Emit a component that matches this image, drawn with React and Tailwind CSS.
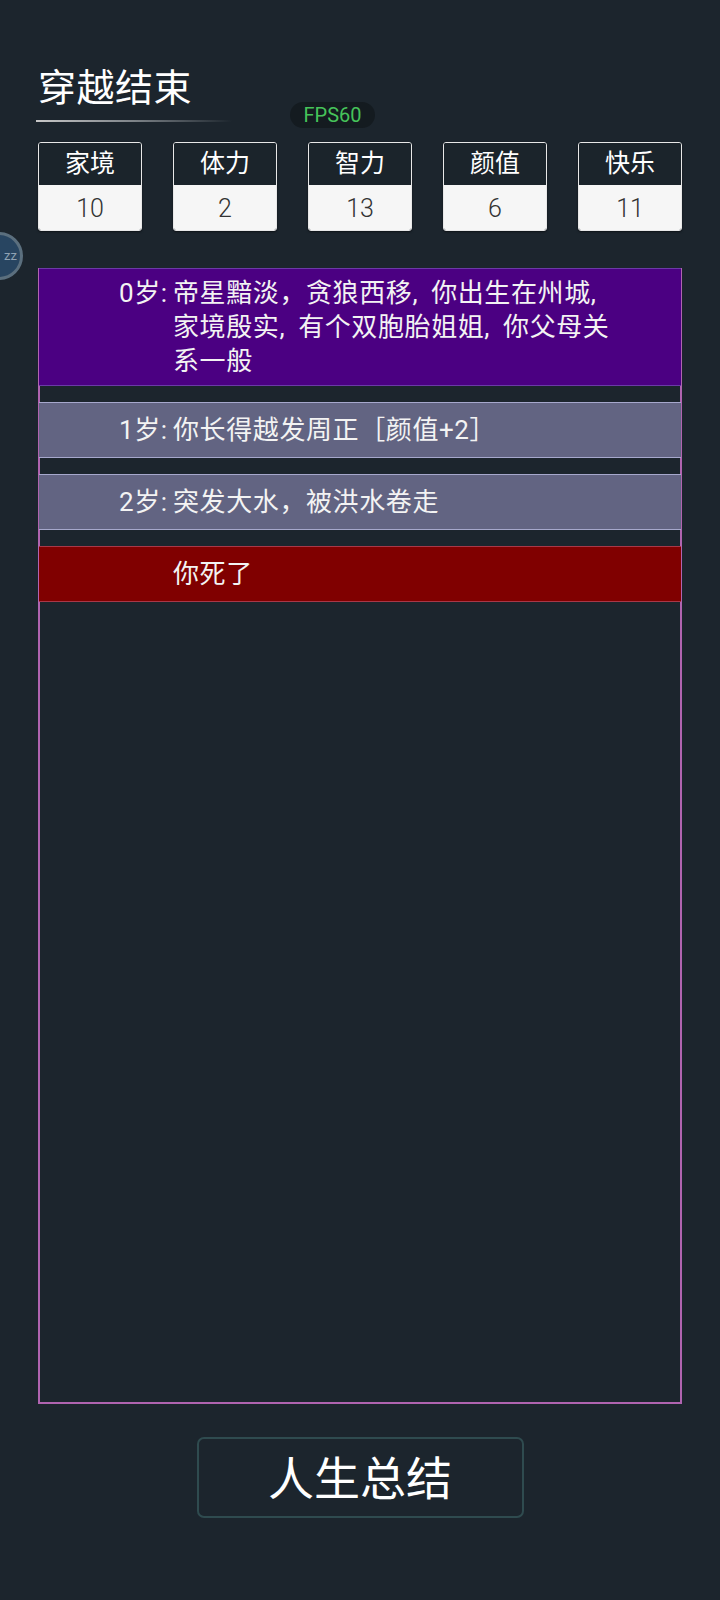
import React from 'react';

const STATS = [
  { name: '家境', value: 10 },
  { name: '体力', value: 2 },
  { name: '智力', value: 13 },
  { name: '颜值', value: 6 },
  { name: '快乐', value: 11 },
];

const LOG = [
  { age: '0岁:', text: '帝星黯淡，贪狼西移,你出生在州城,家境殷实,有个双胞胎姐姐,你父母关系一般', tone: 'purple' },
  { age: '1岁:', text: '你长得越发周正［颜值+2］', tone: 'gray' },
  { age: '2岁:', text: '突发大水，被洪水卷走', tone: 'gray' },
  { age: '', text: '你死了', tone: 'red' },
];

const TONES = {
  purple: 'bg-[#4b0082] border-[#6b3aa6]',
  gray: 'bg-[#626482] border-[#a6a8cc]',
  red: 'bg-[#800000] border-[#a83848]',
};

function Wide({ text }) {
  const parts = text.split(',');
  return parts.map((p, i) => (
    <React.Fragment key={i}>
      {p}
      {i < parts.length - 1 && <span className="mr-[13px]">,</span>}
    </React.Fragment>
  ));
}

export default function App() {
  return (
    <div
      className="relative min-h-[1600px] w-[720px] overflow-hidden bg-[#1c252d] text-white"
      style={{ fontFamily: "Roboto, 'Noto Sans CJK SC', sans-serif" }}
    >
      {/* FPS overlay */}
      <div className="absolute left-[290px] top-[102px] flex h-[26px] w-[85px] items-center justify-center rounded-full bg-[#141b20] text-[20px] leading-none text-[#46c35a]">
        FPS60
      </div>

      {/* floating sleep bubble */}
      <div className="absolute left-[-25px] top-[232px] flex h-[48px] w-[48px] items-center justify-end rounded-full border-[3px] border-[#5b6f7e] bg-[#284561] pr-[3px] text-[13px] text-[#8fa2b3]">
        zz
      </div>

      <div className="flex flex-col pt-[66px]">
        {/* Title */}
        <div className="pl-[38px]">
          <h1 className="text-[38px] leading-[44px] tracking-[0.5px]">穿越结束</h1>
          <div className="ml-[-2px] mt-[10px] h-[2px] w-[196px] bg-gradient-to-r from-[#c8c8c8] via-[#7d8388] to-transparent" />
        </div>

        {/* Stats */}
        <div className="mt-[20px] flex gap-[31px] pl-[38px]">
          {STATS.map(s => (
            <div key={s.name} className="flex h-[89px] w-[104px] flex-col overflow-hidden rounded-[3px] border border-[#e8e8e8] shadow-[0_1px_2px_rgba(0,0,0,0.5)]">
              <div className="flex h-[42px] items-center justify-center bg-[#1b242b] text-[25px] text-white">
                {s.name}
              </div>
              <div className="flex flex-1 items-center justify-center bg-[#f6f6f6] pt-[3px] text-[25px] font-light text-[#333]">
                {s.value}
              </div>
            </div>
          ))}
        </div>

        {/* Life log */}
        <div className="mx-[38px] mt-[37px] flex h-[1136px] flex-col gap-[16px] border-2 border-t-0 border-[#b064b0]">
          {LOG.map((e, i) => (
            <div
              key={i}
              className={`mx-[-1px] flex min-h-[56px] items-center border-y py-[7px] pl-[80px] text-[26px] leading-[34px] tracking-[0.6px] text-[#f3f3f3] ${TONES[e.tone]}`}
            >
              <div className="flex w-[506px] items-start">
                <span className="w-[54px] shrink-0">{e.age}</span>
                <span className="flex-1"><Wide text={e.text} /></span>
              </div>
            </div>
          ))}
        </div>

        {/* Summary button */}
        <div className="mt-[33px] flex justify-center">
          <button className="h-[81px] w-[327px] rounded-[7px] border-2 border-[#2f4b4f] bg-[#1c252d] pt-[4px] text-[46px] text-white">
            人生总结
          </button>
        </div>
      </div>
    </div>
  );
}
